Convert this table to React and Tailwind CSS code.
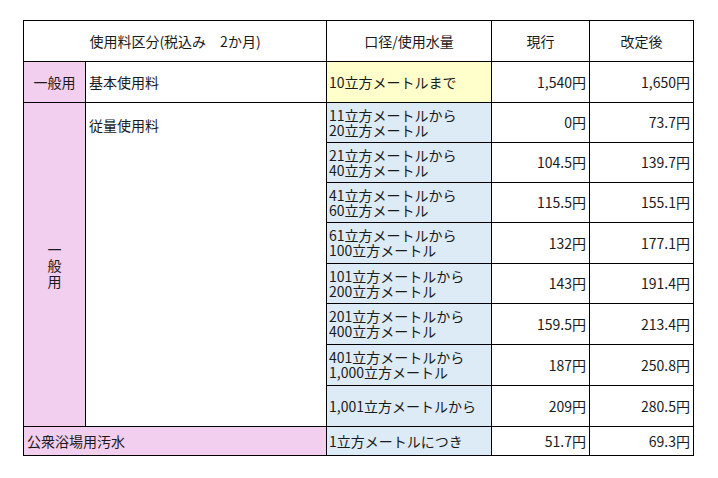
import React from 'react';

const rows = [
  ['11立方メートルから', '20立方メートル', '0円', '73.7円'],
  ['21立方メートルから', '40立方メートル', '104.5円', '139.7円'],
  ['41立方メートルから', '60立方メートル', '115.5円', '155.1円'],
  ['61立方メートルから', '100立方メートル', '132円', '177.1円'],
  ['101立方メートルから', '200立方メートル', '143円', '191.4円'],
  ['201立方メートルから', '400立方メートル', '159.5円', '213.4円'],
  ['401立方メートルから', '1,000立方メートル', '187円', '250.8円'],
];

const heights = ['h-[40px]', 'h-[40px]', 'h-[40px]', 'h-[41px]', 'h-[40px]', 'h-[41px]', 'h-[41px]'];

const cell = 'border border-black';

export default function App() {
  return (
    <div className="min-h-screen bg-white pt-[20px] pl-[23px] text-[14px] text-[#1a1a1a] font-['Noto_Sans_CJK_JP','Noto_Sans',sans-serif]">
      <table className="table-fixed border-collapse w-[670px]">
        <colgroup>
          <col className="w-[62px]" />
          <col className="w-[241px]" />
          <col className="w-[165px]" />
          <col className="w-[98px]" />
          <col className="w-[104px]" />
        </colgroup>
        <tbody>
          <tr className="h-[41px]">
            <td colSpan={2} className={`${cell} text-center`}>使用料区分(税込み　2か月)</td>
            <td className={`${cell} text-center`}>口径/使用水量</td>
            <td className={`${cell} text-center`}>現行</td>
            <td className={`${cell} text-center`}>改定後</td>
          </tr>
          <tr className="h-[41px]">
            <td className={`${cell} bg-[#f2ceef] text-center`}>一般用</td>
            <td className={`${cell} pl-[3px]`}>基本使用料</td>
            <td className={`${cell} bg-[#ffffcc] pl-[2px]`}>10立方メートルまで</td>
            <td className={`${cell} text-right pr-[3px]`}>1,540円</td>
            <td className={`${cell} text-right pr-[3px]`}>1,650円</td>
          </tr>
          {rows.map((r, i) => (
            <tr key={i} className={heights[i]}>
              {i === 0 && (
                <>
                  <td rowSpan={8} className={`${cell} bg-[#f2ceef] text-center align-middle`}>
                    <div className="flex flex-col items-center leading-[16px]">
                      <span>一</span>
                      <span>般</span>
                      <span>用</span>
                    </div>
                  </td>
                  <td rowSpan={8} className={`${cell} align-top pl-[3px] pt-[12px]`}>従量使用料</td>
                </>
              )}
              <td className={`${cell} bg-[#ddebf7] pl-[2px] leading-[15px]`}>
                <div>{r[0]}</div>
                <div>{r[1]}</div>
              </td>
              <td className={`${cell} text-right pr-[3px]`}>{r[2]}</td>
              <td className={`${cell} text-right pr-[3px]`}>{r[3]}</td>
            </tr>
          ))}
          <tr className="h-[41px]">
            <td className={`${cell} bg-[#ddebf7] pl-[2px]`}>1,001立方メートルから</td>
            <td className={`${cell} text-right pr-[3px]`}>209円</td>
            <td className={`${cell} text-right pr-[3px]`}>280.5円</td>
          </tr>
          <tr className="h-[29px]">
            <td colSpan={2} className={`${cell} bg-[#f2ceef] pl-[3px]`}>公衆浴場用汚水</td>
            <td className={`${cell} bg-[#ddebf7] pl-[2px]`}>1立方メートルにつき</td>
            <td className={`${cell} text-right pr-[3px]`}>51.7円</td>
            <td className={`${cell} text-right pr-[3px]`}>69.3円</td>
          </tr>
        </tbody>
      </table>
    </div>
  );
}
